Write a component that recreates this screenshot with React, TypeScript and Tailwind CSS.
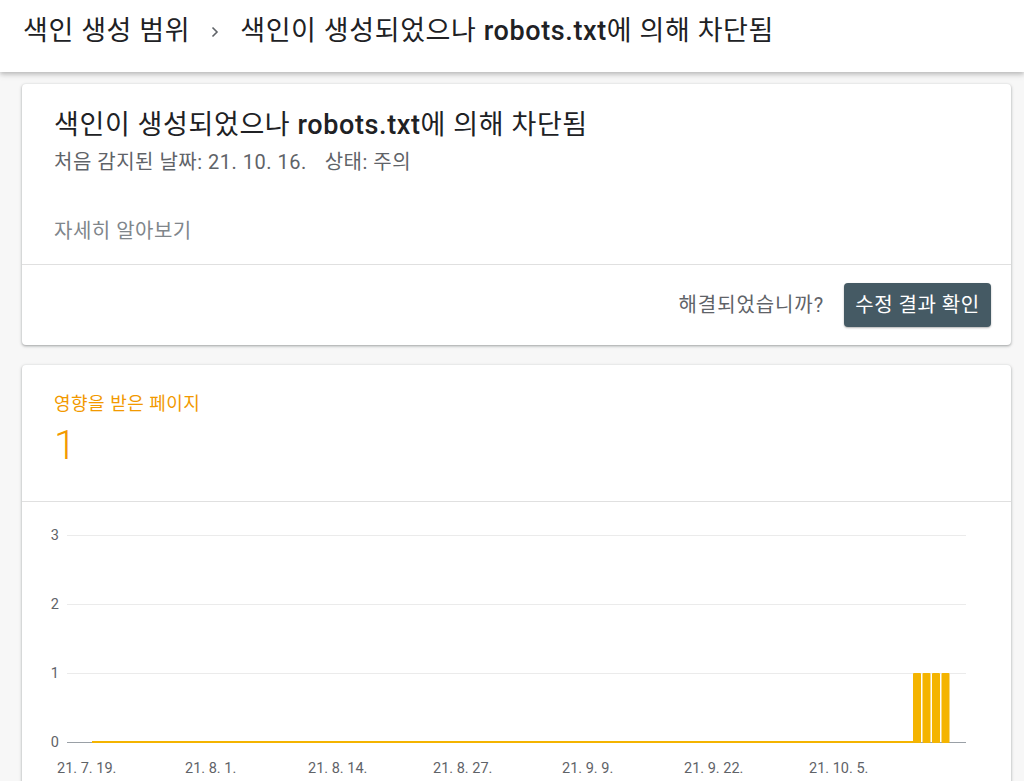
import React from 'react';

const FONT = 'font-["Roboto","Noto_Sans_CJK_KR",sans-serif]';

const Y_TICKS = [
  { v: 3, y: 33 },
  { v: 2, y: 102 },
  { v: 1, y: 171 },
  { v: 0, y: 240 },
];

// x label start positions, relative to card left edge
const X_LABELS = [
  { t: '21. 7. 19.', x: 35 },
  { t: '21. 8. 1.', x: 163 },
  { t: '21. 8. 14.', x: 286 },
  { t: '21. 8. 27.', x: 411 },
  { t: '21. 9. 9.', x: 540 },
  { t: '21. 9. 22.', x: 662 },
  { t: '21. 10. 5.', x: 787 },
];

function Chart() {
  const left = 45;
  const right = 944;
  const base = 240;
  const barTop = 171;
  const bars = [891, 900.5, 910, 919.5];
  return (
    <svg width="989" height="280" className="block">
      {Y_TICKS.map(t => (
        <g key={t.v}>
          <line x1={left} x2={right} y1={t.y + 0.5} y2={t.y + 0.5} stroke={t.v === 0 ? '#9aa0a6' : '#ebebeb'} strokeWidth="1" />
          <text x="37" y={t.y + 5} textAnchor="end" fontSize="14.5" fill="#5f6368" fontFamily="Roboto, sans-serif">{t.v}</text>
        </g>
      ))}
      <line x1="70" x2="891" y1={base} y2={base} stroke="#f4b400" strokeWidth="2" />
      {bars.map(x => (
        <rect key={x} x={x} y={barTop} width="8" height={base + 1 - barTop} rx="1" fill="#f4b400" />
      ))}
      {X_LABELS.map(l => (
        <text key={l.t} x={l.x} y="271" fontSize="14.5" fill="#5f6368" fontFamily="Roboto, sans-serif">{l.t}</text>
      ))}
    </svg>
  );
}

export default function App() {
  return (
    <div className={`${FONT} min-h-[781px] bg-[#f7f7f7] text-[#202124]`}>
      {/* Header */}
      <header className="h-[72px] bg-white flex items-center px-[23px] pb-[9px] shadow-[0_2px_4px_rgba(0,0,0,0.18),0_4px_6px_rgba(0,0,0,0.08)] relative z-10">
        <div className="flex items-center text-[27px] tracking-[0.6px]">
          <span>색인 생성 범위</span>
          <svg width="24" height="24" viewBox="0 0 24 24" className="mx-[13px] mt-[1px]">
            <path d="M9.5 7.5 L14 12 L9.5 16.5" fill="none" stroke="#5f6368" strokeWidth="1.6" />
          </svg>
          <span>
            색인이 생성되었으나 <span className="font-medium">robots.txt</span>에 의해 차단됨
          </span>
        </div>
      </header>

      <main className="pt-[12px] pl-[22px] pr-[13px] flex flex-col gap-[20px]">
        {/* Issue card */}
        <section className="bg-white rounded-[4px] shadow-[0_1px_2px_rgba(60,64,67,0.3),0_1px_3px_1px_rgba(60,64,67,0.15)]">
          <div className="px-[32px] pt-[22px] h-[180px]">
            <h1 className="text-[27px] tracking-[0.6px] leading-[38px]">
              색인이 생성되었으나 <span className="font-medium">robots.txt</span>에 의해 차단됨
            </h1>
            <div className="text-[20px] tracking-[0.5px] text-[#5f6368] leading-[28px] mt-[4px]">
              처음 감지된 날짜: 21. 10. 16.<span className="ml-[18px]">상태: 주의</span>
            </div>
            <div className="text-[20px] tracking-[0.5px] text-[#80868b] mt-[41px] leading-[28px]">자세히 알아보기</div>
          </div>
          <div className="border-t border-[#e0e0e0] h-[81px] flex items-center justify-end pr-[20px] gap-[20px]">
            <span className="text-[20px] tracking-[0.9px] text-[#5f6368]">해결되었습니까?</span>
            <button className="h-[44px] w-[147px] rounded-[4px] bg-[#455a64] text-white text-[20px] tracking-[0.5px] shadow-[0_1px_2px_rgba(0,0,0,0.3)]">
              수정 결과 확인
            </button>
          </div>
        </section>

        {/* Affected pages card */}
        <section className="bg-white rounded-t-[4px] shadow-[0_1px_2px_rgba(60,64,67,0.3),0_1px_3px_1px_rgba(60,64,67,0.15)]">
          <div className="px-[32px] pt-[26px] h-[136px]">
            <div className="text-[18px] tracking-[0.5px] text-[#f29900] leading-[26px]">영향을 받은 페이지</div>
            <div className="text-[40px] font-light text-[#f29900] leading-[56px] mt-[1px]">1</div>
          </div>
          <div className="border-t border-[#e0e0e0]">
            <Chart />
          </div>
        </section>
      </main>
    </div>
  );
}
